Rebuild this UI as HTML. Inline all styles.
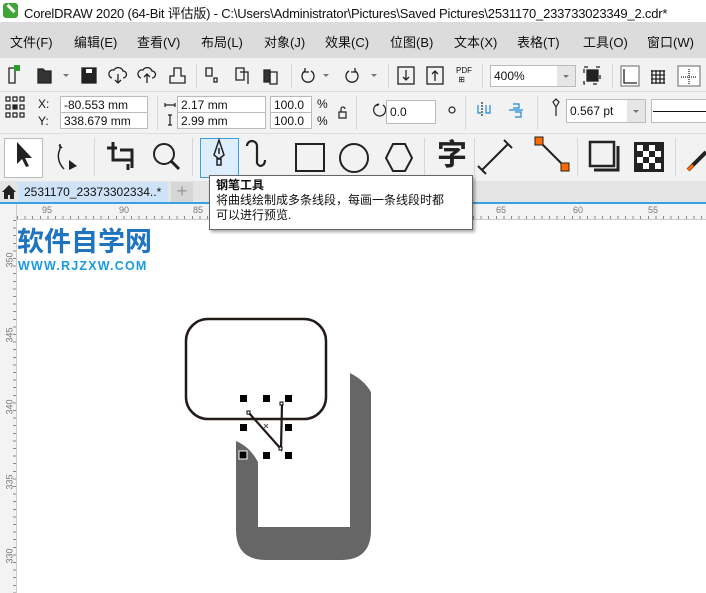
<!DOCTYPE html>
<html><head><meta charset="utf-8"><style>
*{margin:0;padding:0;box-sizing:border-box}
body{width:706px;height:593px;overflow:hidden;background:#fff;font-family:"Liberation Sans","Noto Sans CJK SC",sans-serif;position:relative;font-size:12px;color:#111}
.a{position:absolute}
.menu span{position:absolute;top:10px;font-size:13px}
.inp{position:absolute;background:#fff;border:1px solid #bbb;font-size:12px;padding:1px 3px;height:18px}
.sep{position:absolute;width:1px;background:#d6d6d6}
.tri{position:absolute;width:0;height:0;border-left:3px solid transparent;border-top:3px solid #777;border-right:3px solid transparent}
</style></head><body>
<div class="a" style="left:0;top:0;width:706px;height:22px;background:#fff"></div>
<div class="a" style="left:3px;top:3px;width:15px;height:15px;background:#3fa535;border-radius:3px"></div>
<div class="a" style="left:6px;top:7px;width:10px;height:3px;background:#fff;transform:rotate(45deg)"></div>
<div class="a" style="left:24px;top:3px;font-size:13px;white-space:nowrap;letter-spacing:-0.2px">CorelDRAW 2020 (64-Bit 评估版) - C:\Users\Administrator\Pictures\Saved Pictures\2531170_233733023349_2.cdr*</div>
<div class="a menu" style="left:0;top:22px;width:706px;height:36px;background:#dcdcdc">
<span style="left:10px">文件(F)</span><span style="left:74px">编辑(E)</span><span style="left:137px">查看(V)</span><span style="left:201px">布局(L)</span><span style="left:264px">对象(J)</span><span style="left:325px">效果(C)</span><span style="left:390px">位图(B)</span><span style="left:454px">文本(X)</span><span style="left:517px">表格(T)</span><span style="left:583px">工具(O)</span><span style="left:647px">窗口(W)</span>
</div>
<div class="a" style="left:0;top:58px;width:706px;height:76px;background:#f2f2f2"></div>
<div class="a" style="left:0;top:91px;width:706px;height:1px;background:#dedede"></div>
<div class="a" style="left:0;top:133px;width:706px;height:1px;background:#dedede"></div>
<svg class="a" style="left:0;top:58px" width="706" height="34" fill="none" stroke="#222" stroke-width="1.3">
<path d="M9 10h6v15H9zM9 10l0 0"/><rect x="14" y="7" width="6" height="6" fill="#2a9d2a" stroke="none"/>
<path d="M38 11h5l2 2h6v12H38z" fill="#333"/><path d="M63 16l3 3 3-3" fill="#777" stroke="none"/>
<rect x="82" y="10" width="14" height="15" fill="#222"/><rect x="86" y="11" width="6" height="4" fill="#fff" stroke="none"/>
<path d="M112 20a4 4 0 0 1 2-8 5 5 0 0 1 9 1 3.5 3.5 0 0 1 0 7M118 16v9M115 22l3 3 3-3"/>
<path d="M141 20a4 4 0 0 1 2-8 5 5 0 0 1 9 1 3.5 3.5 0 0 1 0 7M147 25v-9M144 19l3-3 3 3"/>
<path d="M170 18v7h15v-7h-4v-8h-7v8z"/>
<path d="M206 10h6v8h-6zM214 20h3v4h-3z"/><path d="M236 10h8v12h-8zM240 14h8v12"/><path d="M264 12h6v12h-6z" fill="#333"/><path d="M270 14h7v12h-7z"/>
<path d="M305 13a6 6 0 1 0 6 0M305 10v4h4"/><path d="M323 16l3 3 3-3" fill="#777" stroke="none"/>
<path d="M355 13a6 6 0 1 1-6 0M355 10v4h-4"/><path d="M371 16l3 3 3-3" fill="#777" stroke="none"/>
<rect x="398" y="9" width="16" height="17"/><path d="M406 12v10M403 19l3 3 3-3"/>
<rect x="427" y="9" width="16" height="17"/><path d="M435 23v-10M432 16l3-3 3 3"/>
<rect x="584" y="9" width="16" height="17" stroke-dasharray="4 8"/><rect x="587" y="12" width="11" height="11" fill="#222"/>
<rect x="621" y="8" width="18" height="20" fill="#fff" stroke="#888"/><path d="M624 11v14h13"/>
<path d="M651 13h14M651 17h14M651 21h14M651 25h14M652 12v14M656 12v14M660 12v14M664 12v14"/>
<rect x="678" y="8" width="22" height="20" fill="#fff" stroke="#888"/><path d="M689 11v15M681 19h16" stroke-dasharray="1 1"/>
</svg>
<div class="a" style="left:456px;top:66px;font-size:8px;line-height:9px">PDF<br>&nbsp;⊞</div>
<div class="inp" style="left:490px;top:65px;width:86px;height:22px;padding-top:3px">400%</div>
<div class="a" style="left:557px;top:66px;width:18px;height:20px;background:#e6e6e6"></div><div class="tri" style="left:563px;top:75px"></div>
<div class="sep" style="left:196px;top:64px;height:24px"></div><div class="sep" style="left:291px;top:64px;height:24px"></div><div class="sep" style="left:388px;top:64px;height:24px"></div><div class="sep" style="left:482px;top:64px;height:24px"></div><div class="sep" style="left:612px;top:64px;height:24px"></div>
<svg class="a" style="left:0;top:92px" width="706" height="42" fill="none" stroke="#222" stroke-width="1.2">
<path d="M6 5h4v4H6zM13 5h4v4h-4zM20 5h4v4h-4zM6 13h4v4H6zM20 13h4v4h-4zM6 21h4v4H6zM13 21h4v4h-4zM20 21h4v4h-4z"/><rect x="13" y="13" width="4" height="4" fill="#222"/>
<path d="M165 13h10M165 11v4M175 11v4M170 23v10M168 23h4M168 33h4"/>
<path d="M339 20h7v6h-7zM341 20v-3a2 2 0 0 1 4 0" />
<path d="M379 12a6 6 0 1 0 4 1M377 14l2-2"/>
<circle cx="452" cy="18" r="3"/>
<path d="M478 13v8h3M486 13v8h4v-8" stroke="#1a8ad4"/><path d="M482 10v14" stroke-dasharray="2 1"/>
<path d="M513 12h6v4h-6M509 18h14M515 20h6v5h-6" stroke="#1a8ad4"/>
<path d="M553 10l3 5 3-5-3-3z M556 15v9"/>
</svg>
<div class="a" style="left:38px;top:97px;font-size:12px">X:</div><div class="a" style="left:38px;top:114px;font-size:12px">Y:</div>
<div class="inp" style="left:60px;top:96px;width:88px;height:17px">-80.553 mm</div>
<div class="inp" style="left:60px;top:112px;width:88px;height:17px">338.679 mm</div>
<div class="sep" style="left:157px;top:96px;height:34px"></div>
<div class="inp" style="left:177px;top:96px;width:89px;height:17px">2.17 mm</div>
<div class="inp" style="left:177px;top:112px;width:89px;height:17px">2.99 mm</div>
<div class="inp" style="left:270px;top:96px;width:42px;height:17px">100.0</div>
<div class="inp" style="left:270px;top:112px;width:42px;height:17px">100.0</div>
<div class="a" style="left:317px;top:97px">%</div><div class="a" style="left:317px;top:114px">%</div>
<div class="sep" style="left:356px;top:96px;height:34px"></div>
<div class="inp" style="left:386px;top:100px;width:50px;height:24px;padding-top:4px">0.0</div>
<div class="sep" style="left:465px;top:96px;height:34px"></div><div class="sep" style="left:537px;top:96px;height:34px"></div>
<div class="inp" style="left:566px;top:99px;width:80px;height:24px;padding-top:4px">0.567 pt</div>
<div class="a" style="left:627px;top:100px;width:18px;height:22px;background:#e6e6e6"></div><div class="tri" style="left:633px;top:110px"></div>
<div class="inp" style="left:651px;top:99px;width:60px;height:24px"></div><div class="a" style="left:653px;top:111px;width:55px;height:1px;background:#111"></div>
<div class="a" style="left:0;top:134px;width:706px;height:47px;background:#f2f2f2"></div>
<div class="a" style="left:4px;top:138px;width:39px;height:40px;background:#fff;border:1px solid #bbb"></div>
<div class="a" style="left:200px;top:138px;width:39px;height:40px;background:#ddeeff;border:1px solid #39a0e0"></div>
<svg class="a" style="left:0;top:134px" width="706" height="47" fill="none" stroke="#222" stroke-width="2">
<path d="M17 8v22l5-5 4 8 3-1-4-8h7z" fill="#222" stroke="none"/>
<path d="M60 10v5m0 0c-3 6-2 14 4 20M62 14l-3-3" stroke-width="1.5"/><path d="M69 26l8 6-8 4z" fill="#222" stroke="none"/>
<path d="M113 8v18h19M120 16h12v18M107 14h10M128 30v6" stroke-width="3"/>
<circle cx="164" cy="20" r="10" stroke-width="2"/><path d="M171 27l8 8" stroke-width="3"/>
<path d="M219 6l-5 15 5 4 5-4zM219 14v6M217 25h4v6h-4z" stroke-width="1.5"/>
<path d="M265 26c0 6-6 8-8 3V12a5 5 0 0 0-10 0" stroke-width="2.2"/>
<rect x="296" y="10" width="28" height="27"/>
<circle cx="354" cy="24" r="14"/>
<path d="M393 10h12l7 14-7 13h-12l-7-13z"/>
<path d="M482 36l26-26M478 32l8 8M504 6l8 8"/>
<path d="M540 8l25 25" /><rect x="535" y="3" width="8" height="8" fill="#ff6a00" stroke="#222" stroke-width="1"/><rect x="561" y="29" width="8" height="8" fill="#ff6a00" stroke="#222" stroke-width="1"/>
<rect x="590" y="8" width="24" height="24" stroke-width="2.5"/><path d="M618 12v24H594" stroke-width="3"/>
<rect x="634" y="8" width="30" height="30" fill="#222" stroke="none"/>
<g fill="#fff" stroke="none"><rect x="637" y="11" width="6" height="6"/><rect x="649" y="11" width="6" height="6"/><rect x="643" y="17" width="6" height="6"/><rect x="655" y="17" width="6" height="6"/><rect x="637" y="23" width="6" height="6"/><rect x="649" y="23" width="6" height="6"/><rect x="643" y="29" width="6" height="6"/><rect x="655" y="29" width="6" height="6"/></g>
<path d="M688 36l18-18" stroke-width="4"/><path d="M688 36l5-5" stroke="#ff6a00" stroke-width="3"/>
</svg>
<div class="a" style="left:437px;top:139px;font-size:30px;font-weight:bold;line-height:34px;color:#222">字</div>
<div class="sep" style="left:94px;top:138px;height:38px"></div><div class="sep" style="left:192px;top:138px;height:38px"></div><div class="sep" style="left:424px;top:138px;height:38px"></div><div class="sep" style="left:474px;top:138px;height:38px"></div><div class="sep" style="left:577px;top:138px;height:38px"></div><div class="sep" style="left:675px;top:138px;height:38px"></div>
<div class="a" style="left:0;top:181px;width:706px;height:22px;background:#e4e4e4"></div>
<svg class="a" style="left:2px;top:184px" width="14" height="16"><path d="M7 1L0 8h2v7h4v-4h2v4h4V8h2z" fill="#222"/></svg>
<div class="a" style="left:18px;top:182px;width:150px;height:20px;background:#cfe3f8;font-size:12px;padding:3px 6px">2531170_23373302334..*</div>
<div class="a" style="left:171px;top:182px;width:22px;height:20px;background:#d6d6d6;color:#999;font-size:18px;line-height:19px;text-align:center">+</div>
<div class="a" style="left:0;top:202px;width:706px;height:2px;background:#3aa0e0"></div>
<div class="a" style="left:0;top:204px;width:706px;height:16px;background:#f3f3f3;border-bottom:1px solid #ccc"></div>
<div class="a" style="left:0;top:204px;width:17px;height:389px;background:#f3f3f3;border-right:1px solid #ccc"></div>
<div class="a" style="top:205px;left:42px;font-size:9px;color:#777">95</div><div class="a" style="top:205px;left:119px;font-size:9px;color:#777">90</div><div class="a" style="top:205px;left:193px;font-size:9px;color:#777">85</div><div class="a" style="top:205px;left:496px;font-size:9px;color:#777">65</div><div class="a" style="top:205px;left:573px;font-size:9px;color:#777">60</div><div class="a" style="top:205px;left:648px;font-size:9px;color:#777">55</div>
<div class="a" style="left:17px;top:216px;width:689px;height:3px;background:repeating-linear-gradient(90deg,#888 0 1px,transparent 1px 7.6px)"></div>
<div class="a" style="left:13px;top:220px;width:3px;height:373px;background:repeating-linear-gradient(180deg,#888 0 1px,transparent 1px 7.6px)"></div>
<div class="a" style="left:2px;top:255px;font-size:9px;color:#777;transform:rotate(-90deg)">350</div>
<div class="a" style="left:2px;top:330px;font-size:9px;color:#777;transform:rotate(-90deg)">345</div>
<div class="a" style="left:2px;top:402px;font-size:9px;color:#777;transform:rotate(-90deg)">340</div>
<div class="a" style="left:2px;top:477px;font-size:9px;color:#777;transform:rotate(-90deg)">335</div>
<div class="a" style="left:2px;top:551px;font-size:9px;color:#777;transform:rotate(-90deg)">330</div>
<div class="a" style="left:17px;top:226px;font-size:27px;font-weight:bold;color:#1f74c0;line-height:32px;letter-spacing:0px">软件自学网</div>
<div class="a" style="left:18px;top:259px;font-size:12.5px;font-weight:bold;color:#1a9be0;letter-spacing:1.2px">WWW.RJZXW.COM</div>
<svg class="a" style="left:0;top:0" width="706" height="593">
<path d="M236 441 Q250 447 258 462 V527 H350 V373 Q364 380 371 392 V530 Q371 560 341 560 H266 Q236 560 236 530 Z" fill="#666"/>
<rect x="186" y="319" width="140" height="100" rx="22" fill="none" stroke="#231a17" stroke-width="2.5"/>
<path d="M249 413 L281 449 L282 404" fill="none" stroke="#231a17" stroke-width="2.2"/>
<g fill="#000"><rect x="240" y="395" width="7" height="7"/><rect x="263" y="395" width="7" height="7"/><rect x="285" y="395" width="7" height="7"/><rect x="240" y="424" width="7" height="7"/><rect x="285" y="424" width="7" height="7"/><rect x="239" y="451" width="8" height="8" stroke="#fff" stroke-width="1"/><rect x="263" y="452" width="7" height="7"/><rect x="285" y="452" width="7" height="7"/></g>
<g fill="#fff" stroke="#000" stroke-width="1"><rect x="247" y="411" width="3" height="3"/><rect x="280" y="402" width="3" height="3"/><rect x="279" y="447" width="3" height="3"/></g>
<path d="M264 424l4 4M268 424l-4 4" stroke="#555" stroke-width="1"/>
</svg>
<div class="a" style="left:209px;top:175px;width:264px;height:55px;background:#fff;border:1px solid #666;box-shadow:2px 2px 3px rgba(0,0,0,.35);padding:2px 6px;font-size:12px;line-height:15px">
<div style="font-weight:bold">钢笔工具</div><div>将曲线绘制成多条线段，每画一条线段时都</div><div>可以进行预览.</div></div>
</body></html>
